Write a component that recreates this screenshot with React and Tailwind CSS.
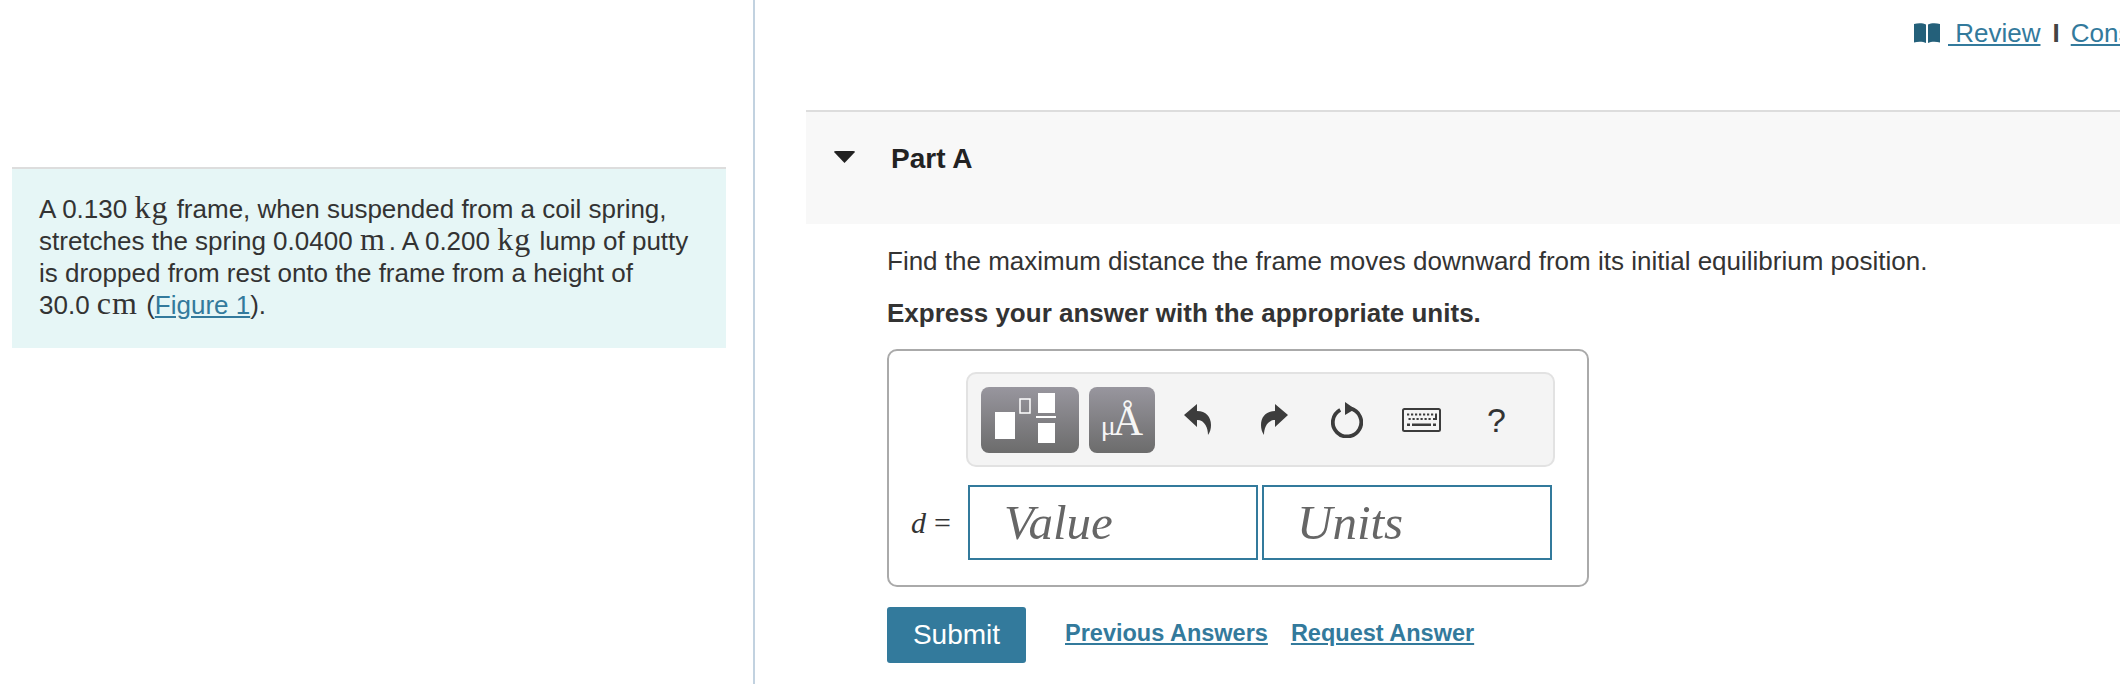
import React from 'react';

const Unit = ({ children }) => (
  <span className="mr-[1px] font-['Liberation_Serif',serif] text-[32px] leading-[0] tracking-[1px]">{children}</span>
);

function BookIcon() {
  return (
    <svg width="26" height="21" viewBox="0 0 26 21" className="mt-[5px] shrink-0">
      <path d="M0 1 C4 0 9 0 12 1.5 V20 C9 18.5 4 18.5 0 19.5 Z" fill="#24607a" />
      <path d="M26 1 C22 0 17 0 14 1.5 V20 C17 18.5 22 18.5 26 19.5 Z" fill="#24607a" />
    </svg>
  );
}

function TemplateIcon() {
  return (
    <svg width="98" height="66" viewBox="0 0 98 66">
      <rect x="14" y="25" width="20" height="27" fill="#fff" />
      <rect x="39" y="12" width="10" height="14" fill="none" stroke="#fff" strokeWidth="1.5" />
      <rect x="57" y="6" width="17" height="20" fill="#fff" />
      <rect x="55" y="29" width="20" height="2" fill="#fff" />
      <rect x="57" y="36" width="17" height="20" fill="#fff" />
    </svg>
  );
}

function UndoIcon({ flip }) {
  return (
    <svg width="27" height="31" viewBox="0 0 27 31" className={flip ? '-scale-x-100' : ''}>
      <path d="M0 11 L13 0 V7 C22 7 27 13 27 21 C27 25 26 28 24 31 C24 24 21 16 13 16 V23 Z" fill="#3c3c3c" />
    </svg>
  );
}

function ResetIcon() {
  return (
    <svg width="32" height="36" viewBox="0 0 32 36">
      <path d="M11 7 A14.2 14.2 0 1 0 21 7" fill="none" stroke="#3c3c3c" strokeWidth="3.8" transform="rotate(-8 16 20)" />
      <path d="M14 0 L24 7 L14 13 Z" fill="#3c3c3c" />
    </svg>
  );
}

function KeyboardIcon() {
  const topRow = [5, 9, 13, 17, 21, 25, 29];
  return (
    <svg width="39" height="24" viewBox="0 0 39 24">
      <rect x="1" y="1" width="37" height="22" rx="1.5" fill="#f4f4f4" stroke="#3c3c3c" strokeWidth="2" />
      {topRow.map((x) => (
        <rect key={x} x={x} y="5.5" width="2.2" height="2" fill="#3c3c3c" />
      ))}
      {topRow.slice(0, 6).map((x) => (
        <rect key={x} x={x + 1.5} y="10" width="2.2" height="2" fill="#3c3c3c" />
      ))}
      <path d="M33 5.5 H35 V12 H31 V10 H33 Z" fill="#3c3c3c" />
      <rect x="5" y="15.5" width="3" height="2.5" fill="#3c3c3c" />
      <rect x="10" y="15.5" width="19" height="2.5" fill="#3c3c3c" />
      <rect x="31" y="15.5" width="3" height="2.5" fill="#3c3c3c" />
    </svg>
  );
}

function Toolbar() {
  return (
    <div className="ml-[77px] flex h-[95px] w-[589px] items-center rounded-[10px] border-2 border-[#e2e2e2] bg-[#f4f4f4] pl-[13px]">
      <div className="h-[66px] w-[98px] rounded-lg bg-linear-to-b from-[#98969e] to-[#6c6c6c]">
        <TemplateIcon />
      </div>
      <div className="ml-[10px] flex h-[66px] w-[66px] items-baseline justify-center rounded-lg bg-linear-to-b from-[#98969e] to-[#6c6c6c] pt-[13px] font-['Liberation_Serif',serif] leading-none text-[#f6f6f6]">
        <span className="text-[28px] leading-none">μ</span>
        <span className="-ml-[3px] text-[42px] leading-none">Å</span>
      </div>
      <div className="ml-[29px]"><UndoIcon /></div>
      <div className="ml-[50px]"><UndoIcon flip /></div>
      <div className="ml-[43px]"><ResetIcon /></div>
      <div className="ml-[39px] mt-[1px]"><KeyboardIcon /></div>
      <span className="ml-[46px] text-[34px] leading-none text-[#333]">?</span>
    </div>
  );
}

export default function App() {
  return (
    <div className="flex h-[684px] w-[2120px] overflow-hidden bg-white font-['Liberation_Sans',Arial,sans-serif] text-[#333]">
      <div className="w-[753px] shrink-0 pl-3 pr-[27px] pt-[167px]">
        <div className="h-[181px] border-t-2 border-[#dddddd] bg-[#e6f6f6] px-[27px] pt-[24px] text-[26px] leading-[32px]">
          <p>
            A 0.130 <Unit>kg</Unit> frame, when suspended from a coil spring,
            <br />
            stretches the spring 0.0400 <Unit>m</Unit><span className="ml-[2px]">.</span> A 0.200 <Unit>kg</Unit> lump of putty
            <br />
            is dropped from rest onto the frame from a height of
            <br />
            30.0 <Unit>cm</Unit> (<a href="#figure" className="text-[#337a9c] underline">Figure 1</a>).
          </p>
        </div>
      </div>
      <div className="w-[2px] shrink-0 bg-[#c2d2e0]" />

      <div className="min-w-0 flex-1">
        <div className="flex h-[110px] items-start whitespace-nowrap pl-[1159px] pt-[18px] text-[26px] leading-[30px]">
          <BookIcon />
          <a href="#review" className="ml-[8px] text-[#337a9c] underline">&nbsp;Review</a>
          <span className="ml-[12px] mr-[11px] font-bold text-[#444]">I</span>
          <a href="#contents" className="text-[#337a9c] underline">Constants</a>
        </div>

        <div className="ml-[51px] flex h-[114px] items-start border-t-2 border-[#dddddd] bg-[#f8f8f8] pt-[32px]">
          <svg width="21" height="12" viewBox="0 0 21 12" className="ml-[28px] mt-[7px]">
            <path d="M0 1 Q0 0 2 0 H19 Q21 0 21 1 L10.5 12 Z" fill="#222" />
          </svg>
          <h2 className="ml-[36px] text-[28px] font-bold leading-[30px] text-[#222]">Part A</h2>
        </div>

        <div className="pl-[132px]">
          <p className="mt-[21px] whitespace-nowrap text-[26px] leading-[32px]">
            Find the maximum distance the frame moves downward from its initial equilibrium position.
          </p>
          <p className="mt-[20px] whitespace-nowrap text-[26px] font-bold leading-[32px]">
            Express your answer with the appropriate units.
          </p>

          <div className="mt-[20px] h-[238px] w-[702px] rounded-[10px] border-2 border-[#aaaaaa] pt-[21px]">
            <Toolbar />
            <div className="mt-[18px] flex items-center">
              <div className="flex w-[79px] items-center justify-end gap-[8px] pr-[17px] font-['Liberation_Serif',serif] text-[30px]">
                <i>d</i>
                <span>=</span>
              </div>
              <div className="flex h-[75px] w-[290px] items-center border-2 border-[#337a9c] pl-[34px] font-['Liberation_Serif',serif] text-[49px] italic text-[#666]">
                Value
              </div>
              <div className="ml-[4px] flex h-[75px] w-[290px] items-center border-2 border-[#337a9c] pl-[33px] font-['Liberation_Serif',serif] text-[49px] italic text-[#666]">
                Units
              </div>
            </div>
          </div>

          <div className="mt-[20px] flex items-center">
            <button className="h-[56px] w-[139px] rounded-[3px] bg-[#337a9c] text-[28px] text-white">Submit</button>
            <a href="#previous" className="-mt-[2px] ml-[39px] text-[23.5px] font-bold text-[#337a9c] underline">Previous Answers</a>
            <a href="#request" className="-mt-[2px] ml-[23px] text-[23.5px] font-bold text-[#337a9c] underline">Request Answer</a>
          </div>
        </div>
      </div>
    </div>
  );
}
